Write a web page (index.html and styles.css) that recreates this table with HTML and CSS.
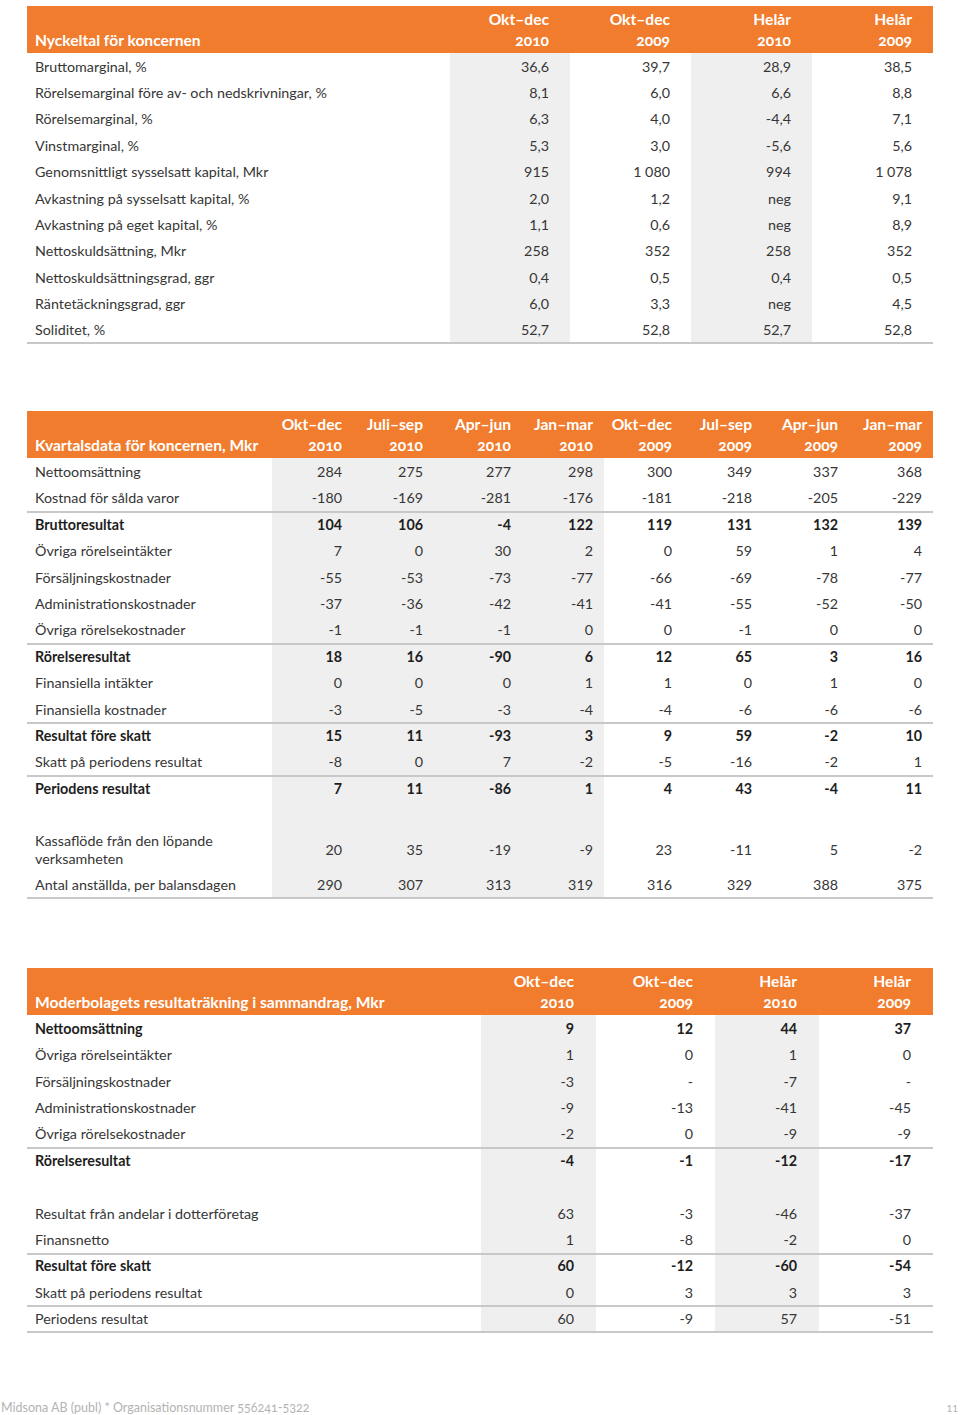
FILE: index.html
```html
<!DOCTYPE html>
<html lang="sv">
<head>
<meta charset="utf-8">
<title>Midsona – Nyckeltal</title>
<link rel="stylesheet" href="styles.css">
</head>
<body>
<div class="page">

<table class="tbl t1">
  <colgroup>
    <col class="w423"><col class="w120"><col class="w121"><col class="w121"><col class="w121">
  </colgroup>
  <thead>
    <tr>
      <th class="title">Nyckeltal för koncernen</th>
      <th>Okt–dec<br><span class="yr">2010</span></th>
      <th>Okt–dec<br><span class="yr">2009</span></th>
      <th>Helår<br><span class="yr">2010</span></th>
      <th>Helår<br><span class="yr">2009</span></th>
    </tr>
  </thead>
  <tbody>
    <tr><td>Bruttomarginal, %</td><td>36,6</td><td>39,7</td><td>28,9</td><td>38,5</td></tr>
    <tr><td>Rörelsemarginal före av- och nedskrivningar, %</td><td>8,1</td><td>6,0</td><td>6,6</td><td>8,8</td></tr>
    <tr><td>Rörelsemarginal, %</td><td>6,3</td><td>4,0</td><td>-4,4</td><td>7,1</td></tr>
    <tr><td>Vinstmarginal, %</td><td>5,3</td><td>3,0</td><td>-5,6</td><td>5,6</td></tr>
    <tr><td>Genomsnittligt sysselsatt kapital, Mkr</td><td>915</td><td>1 080</td><td>994</td><td>1 078</td></tr>
    <tr><td>Avkastning på sysselsatt kapital, %</td><td>2,0</td><td>1,2</td><td>neg</td><td>9,1</td></tr>
    <tr><td>Avkastning på eget kapital, %</td><td>1,1</td><td>0,6</td><td>neg</td><td>8,9</td></tr>
    <tr><td>Nettoskuldsättning, Mkr</td><td>258</td><td>352</td><td>258</td><td>352</td></tr>
    <tr><td>Nettoskuldsättningsgrad, ggr</td><td>0,4</td><td>0,5</td><td>0,4</td><td>0,5</td></tr>
    <tr><td>Räntetäckningsgrad, ggr</td><td>6,0</td><td>3,3</td><td>neg</td><td>4,5</td></tr>
    <tr><td>Soliditet, %</td><td>52,7</td><td>52,8</td><td>52,7</td><td>52,8</td></tr>
  </tbody>
</table>

<table class="tbl t2">
  <colgroup>
    <col class="w245"><col class="w81"><col class="w81"><col class="w88"><col class="w82"><col class="w79"><col class="w80"><col class="w86"><col class="w84">
  </colgroup>
  <thead>
    <tr>
      <th class="title">Kvartalsdata för koncernen, Mkr</th>
      <th>Okt–dec<br><span class="yr">2010</span></th>
      <th>Juli–sep<br><span class="yr">2010</span></th>
      <th>Apr–jun<br><span class="yr">2010</span></th>
      <th>Jan–mar<br><span class="yr">2010</span></th>
      <th>Okt–dec<br><span class="yr">2009</span></th>
      <th>Jul–sep<br><span class="yr">2009</span></th>
      <th>Apr–jun<br><span class="yr">2009</span></th>
      <th>Jan–mar<br><span class="yr">2009</span></th>
    </tr>
  </thead>
  <tbody>
    <tr><td>Nettoomsättning</td><td>284</td><td>275</td><td>277</td><td>298</td><td>300</td><td>349</td><td>337</td><td>368</td></tr>
    <tr><td>Kostnad för sålda varor</td><td>-180</td><td>-169</td><td>-281</td><td>-176</td><td>-181</td><td>-218</td><td>-205</td><td>-229</td></tr>
    <tr class="sep bold"><td>Bruttoresultat</td><td>104</td><td>106</td><td>-4</td><td>122</td><td>119</td><td>131</td><td>132</td><td>139</td></tr>
    <tr><td>Övriga rörelseintäkter</td><td>7</td><td>0</td><td>30</td><td>2</td><td>0</td><td>59</td><td>1</td><td>4</td></tr>
    <tr><td>Försäljningskostnader</td><td>-55</td><td>-53</td><td>-73</td><td>-77</td><td>-66</td><td>-69</td><td>-78</td><td>-77</td></tr>
    <tr><td>Administrationskostnader</td><td>-37</td><td>-36</td><td>-42</td><td>-41</td><td>-41</td><td>-55</td><td>-52</td><td>-50</td></tr>
    <tr><td>Övriga rörelsekostnader</td><td>-1</td><td>-1</td><td>-1</td><td>0</td><td>0</td><td>-1</td><td>0</td><td>0</td></tr>
    <tr class="sep bold"><td>Rörelseresultat</td><td>18</td><td>16</td><td>-90</td><td>6</td><td>12</td><td>65</td><td>3</td><td>16</td></tr>
    <tr><td>Finansiella intäkter</td><td>0</td><td>0</td><td>0</td><td>1</td><td>1</td><td>0</td><td>1</td><td>0</td></tr>
    <tr><td>Finansiella kostnader</td><td>-3</td><td>-5</td><td>-3</td><td>-4</td><td>-4</td><td>-6</td><td>-6</td><td>-6</td></tr>
    <tr class="sep bold"><td>Resultat före skatt</td><td>15</td><td>11</td><td>-93</td><td>3</td><td>9</td><td>59</td><td>-2</td><td>10</td></tr>
    <tr><td>Skatt på periodens resultat</td><td>-8</td><td>0</td><td>7</td><td>-2</td><td>-5</td><td>-16</td><td>-2</td><td>1</td></tr>
    <tr class="sep bold"><td>Periodens resultat</td><td>7</td><td>11</td><td>-86</td><td>1</td><td>4</td><td>43</td><td>-4</td><td>11</td></tr>
    <tr class="blank"><td></td><td></td><td></td><td></td><td></td><td></td><td></td><td></td><td></td></tr>
    <tr class="tall"><td>Kassaflöde från den löpande<br>verksamheten</td><td>20</td><td>35</td><td>-19</td><td>-9</td><td>23</td><td>-11</td><td>5</td><td>-2</td></tr>
    <tr><td>Antal anställda, per balansdagen</td><td>290</td><td>307</td><td>313</td><td>319</td><td>316</td><td>329</td><td>388</td><td>375</td></tr>
  </tbody>
</table>

<table class="tbl t3">
  <colgroup>
    <col class="w454"><col class="w115"><col class="w119"><col class="w104"><col class="w114">
  </colgroup>
  <thead>
    <tr>
      <th class="title">Moderbolagets resultaträkning i sammandrag, Mkr</th>
      <th>Okt–dec<br><span class="yr">2010</span></th>
      <th>Okt–dec<br><span class="yr">2009</span></th>
      <th>Helår<br><span class="yr">2010</span></th>
      <th>Helår<br><span class="yr">2009</span></th>
    </tr>
  </thead>
  <tbody>
    <tr class="bold"><td>Nettoomsättning</td><td>9</td><td>12</td><td>44</td><td>37</td></tr>
    <tr><td>Övriga rörelseintäkter</td><td>1</td><td>0</td><td>1</td><td>0</td></tr>
    <tr><td>Försäljningskostnader</td><td>-3</td><td>-</td><td>-7</td><td>-</td></tr>
    <tr><td>Administrationskostnader</td><td>-9</td><td>-13</td><td>-41</td><td>-45</td></tr>
    <tr><td>Övriga rörelsekostnader</td><td>-2</td><td>0</td><td>-9</td><td>-9</td></tr>
    <tr class="sep bold"><td>Rörelseresultat</td><td>-4</td><td>-1</td><td>-12</td><td>-17</td></tr>
    <tr class="blank"><td></td><td></td><td></td><td></td><td></td></tr>
    <tr><td>Resultat från andelar i dotterföretag</td><td>63</td><td>-3</td><td>-46</td><td>-37</td></tr>
    <tr><td>Finansnetto</td><td>1</td><td>-8</td><td>-2</td><td>0</td></tr>
    <tr class="sep bold"><td>Resultat före skatt</td><td>60</td><td>-12</td><td>-60</td><td>-54</td></tr>
    <tr><td>Skatt på periodens resultat</td><td>0</td><td>3</td><td>3</td><td>3</td></tr>
    <tr class="sep"><td>Periodens resultat</td><td>60</td><td>-9</td><td>57</td><td>-51</td></tr>
  </tbody>
</table>

<footer class="footer">
  <span class="org">Midsona AB (publ) * Organisationsnummer <span class="yr">556241-5322</span></span>
  <span class="pageno">11</span>
</footer>

</div>
</body>
</html>
```

FILE: styles.css
```css
html, body {
  margin: 0;
  padding: 0;
  background: #ffffff;
}

body {
  font-family: Lato, "Liberation Sans", sans-serif;
  color: #363636;
}

.page {
  width: 960px;
  height: 1415px;
  box-sizing: border-box;
  padding-top: 6px;
  display: flex;
  flex-direction: column;
}

.tbl {
  margin-left: 27px;
  width: 906px;
  border-collapse: collapse;
  table-layout: fixed;
  font-size: 14.3px;
  border-bottom: 2px solid #c8c8c8;
}

.t2 { margin-top: 67px; }
.t3 { margin-top: 69px; }

/* column widths */
.w423 { width: 423px; }
.w454 { width: 454px; }
.w245 { width: 245px; }
.w120 { width: 120px; }
.w121 { width: 121px; }
.w115 { width: 115px; }
.w119 { width: 119px; }
.w104 { width: 104px; }
.w114 { width: 114px; }
.w81 { width: 81px; }
.w88 { width: 88px; }
.w82 { width: 82px; }
.w79 { width: 79px; }
.w80 { width: 80px; }
.w86 { width: 86px; }
.w84 { width: 84px; }

/* header */
.tbl thead th {
  background: #f17c2d;
  color: #ffffff;
  font-weight: 700;
  font-size: 15.6px;
  line-height: 21px;
  height: 47px;
  box-sizing: border-box;
  padding: 0 0 2px 0;
  vertical-align: bottom;
  text-align: right;
  white-space: nowrap;
}

.tbl thead th.title {
  text-align: left;
  padding-left: 8px;
}

.yr {
  font-variant-numeric: oldstyle-nums;
}

/* body rows */
.tbl tbody tr {
  height: 26.4px;
}

.tbl tbody td {
  padding: 1px 0 0 0;
  text-align: right;
  vertical-align: middle;
  white-space: nowrap;
  line-height: 18px;
}

.tbl tbody td:first-child {
  text-align: left;
  padding-left: 8px;
}

.tbl tbody tr.tall {
  height: 44px;
}

.tbl tr.bold td {
  font-weight: 700;
  color: #1e1e1e;
}

.tbl tr.sep td {
  box-shadow: inset 0 2px 0 #c8c8c8;
}

/* per-table paddings and column shading */
.t1 thead th, .t1 tbody td { padding-right: 21px; }
.t1 tbody td:nth-child(2),
.t1 tbody td:nth-child(4) { background: #efefef; }

.t2 thead th, .t2 tbody td { padding-right: 11px; }
.t2 tbody td:nth-child(n+2):nth-child(-n+5) { background: #efefef; }

.t3 thead th, .t3 tbody td { padding-right: 22px; }
.t3 tbody td:nth-child(2),
.t3 tbody td:nth-child(4) { background: #efefef; }

.tbl thead th.title { padding-right: 0; }
.tbl tbody td:first-child { padding-right: 0; }

/* footer */
.footer {
  margin-top: auto;
  display: flex;
  justify-content: space-between;
  align-items: baseline;
  padding: 0 2px 0 1px;
  color: #b3b3b3;
  font-size: 12.5px;
  line-height: 13px;
}

.pageno {
  font-size: 10px;
}
```
